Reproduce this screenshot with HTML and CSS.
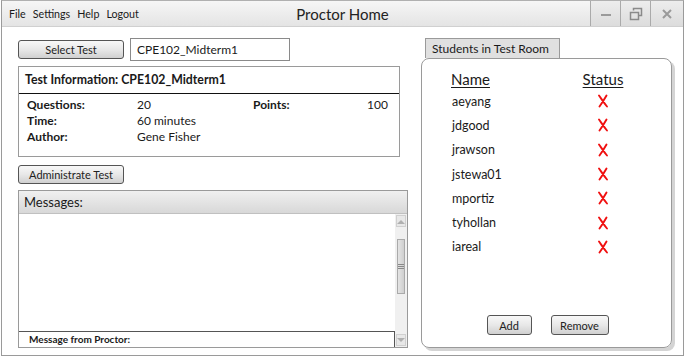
FILE: index.html
```html
<!DOCTYPE html>
<html lang="en">

<head>
    <meta charset="UTF-8">
    <title>Proctor Home</title>
    <link rel="stylesheet" href="styles.css">
</head>

<body>
    <div class="window">
        <div class="titlebar">
            <div class="menu">
                <span>File</span>
                <span>Settings</span>
                <span>Help</span>
                <span>Logout</span>
            </div>
            <div class="title">Proctor Home</div>
            <div class="controls">
                <div class="ctl">
                    <svg width="14" height="14" viewBox="0 0 14 14"><path d="M2 8h10" stroke="#9a9a9a" stroke-width="2" /></svg>
                </div>
                <div class="ctl">
                    <svg width="14" height="14" viewBox="0 0 14 14"><rect x="1.5" y="5.5" width="8" height="7" fill="none" stroke="#8a8a8a" stroke-width="1.5" /><path d="M4.5 3.5V1.5h8v7h-3" fill="none" stroke="#8a8a8a" stroke-width="1.5" /></svg>
                </div>
                <div class="ctl ctl-close">
                    <svg width="14" height="14" viewBox="0 0 14 14"><path d="M3 3l8 8M11 3l-8 8" stroke="#9a9a9a" stroke-width="2" /></svg>
                </div>
            </div>
        </div>

        <div class="content">
            <div class="left">
                <div class="select-row">
                    <button class="btn btn-wide">Select Test</button>
                    <div class="textbox">CPE102_Midterm1</div>
                </div>

                <div class="info">
                    <div class="info-head">Test Information: CPE102_Midterm1</div>
                    <div class="info-body">
                        <span class="lbl">Questions:</span>
                        <span>20</span>
                        <span class="lbl">Points:</span>
                        <span class="num">100</span>
                        <span class="lbl">Time:</span>
                        <span>60 minutes</span>
                        <span></span>
                        <span></span>
                        <span class="lbl">Author:</span>
                        <span>Gene Fisher</span>
                        <span></span>
                        <span></span>
                    </div>
                </div>

                <button class="btn btn-wide btn-admin">Administrate Test</button>

                <div class="messages">
                    <div class="msg-head">Messages:</div>
                    <div class="msg-main">
                        <div class="msg-col">
                            <div class="msg-log"></div>
                            <div class="msg-input">Message from Proctor:</div>
                        </div>
                        <div class="scrollbar">
                            <div class="arrow">
                                <svg width="8" height="5" viewBox="0 0 8 5"><path d="M0 5L4 1L8 5Z" fill="#b0b0b0" /></svg>
                            </div>
                            <div class="track">
                                <div class="thumb"><span></span><span></span><span></span></div>
                            </div>
                            <div class="arrow">
                                <svg width="8" height="5" viewBox="0 0 8 5"><path d="M0 0L4 4L8 0Z" fill="#b0b0b0" /></svg>
                            </div>
                        </div>
                    </div>
                </div>
            </div>

            <div class="right">
                <div class="tab">Students in Test Room</div>
                <div class="panel">
                    <div class="students">
                        <span class="col-head">Name</span>
                        <span class="col-head status">Status</span>
                    </div>
                    <div class="students rows" id="rows"></div>
                    <div class="panel-buttons">
                        <button class="btn btn-add">Add</button>
                        <button class="btn btn-remove">Remove</button>
                    </div>
                </div>
            </div>
        </div>
    </div>

    <script>
        const students = ['aeyang', 'jdgood', 'jrawson', 'jstewa01', 'mportiz', 'tyhollan', 'iareal'];
        const rows = document.querySelector('#rows');

        rows.innerHTML = students.map(name => `
            <span class="name">${name}</span>
            <span class="status">
                <svg width="12" height="14" viewBox="0 0 12 14"><path d="M2 1.5C4.5 5 7 9 10 12.5M9.5 1.5C7.5 5 5 9 2.5 12.5" fill="none" stroke="#f01010" stroke-width="1.9" stroke-linecap="round" /></svg>
            </span>
        `).join('');
    </script>
</body>

</html>
```

FILE: styles.css
```css
body {
    margin: 0;
    padding: 0;
    background-color: white;
    font-family: "Lato", "Open Sans", sans-serif;
    color: #1a1a1a;
}

.window {
    width: 683px;
    height: 356px;
    margin-left: 1px;
    border: 1px solid #9a9a9a;
    border-top: 1px solid #b0b0b0;
    box-sizing: border-box;
}

.titlebar {
    height: 26px;
    display: grid;
    grid-template-columns: 1fr auto 1fr;
    align-items: center;
    background: linear-gradient(#f6f6f6, #e4e4e4);
    border-bottom: 1px solid #d0d0d0;
    box-sizing: border-box;
}

.menu {
    display: flex;
    gap: 7px;
    padding-left: 7px;
    font-size: 10.7px;
}

.title {
    font-size: 15px;
    color: #222;
}

.controls {
    display: flex;
    justify-content: flex-end;
    height: 100%;
}

.ctl {
    width: 29px;
    height: 100%;
    border-left: 1px solid #aaa;
    display: flex;
    align-items: center;
    justify-content: center;
    background: linear-gradient(#ededed, #dcdcdc);
}

.ctl-close {
    width: 32px;
}

.content {
    display: flex;
    padding: 11px 0 0 16px;
}

.left {
    width: 390px;
}

.select-row {
    display: flex;
    align-items: center;
    gap: 6px;
}

.btn {
    font-family: inherit;
    font-size: 11px;
    color: #222;
    height: 19px;
    padding: 0;
    border: 1px solid #555;
    border-radius: 3px;
    background: linear-gradient(#f8f8f8 0%, #e8e8e8 50%, #d0d0d0 100%);
    cursor: pointer;
}

.btn-wide {
    width: 106px;
}

.textbox {
    width: 160px;
    height: 23px;
    border: 1px solid #8a8a8a;
    box-sizing: border-box;
    padding: 3px 0 0 6px;
    font-size: 12px;
}

.info {
    width: 382px;
    height: 91px;
    margin-top: 5px;
    border: 1px solid #9a9a9a;
    box-sizing: border-box;
}

.info-head {
    height: 27px;
    border-bottom: 1px solid #111;
    box-sizing: border-box;
    padding: 5px 0 0 6px;
    font-size: 12.3px;
    font-weight: bold;
}

.info-body {
    display: grid;
    grid-template-columns: 110px 116px 1fr 40px;
    padding: 3px 11px 0 8px;
    font-size: 12px;
    line-height: 16px;
}

.lbl {
    font-weight: bold;
}

.num {
    text-align: right;
}

.btn-admin {
    display: block;
    margin-top: 8px;
}

.messages {
    width: 390px;
    height: 158px;
    margin-top: 6px;
    border: 1px solid #9a9a9a;
    box-sizing: border-box;
    display: flex;
    flex-direction: column;
}

.msg-head {
    height: 23px;
    background: linear-gradient(#f0f0f0, #d8d8d8);
    border-bottom: 1px solid #c0c0c0;
    box-sizing: border-box;
    padding: 3px 0 0 5px;
    font-size: 13px;
}

.msg-main {
    flex: 1;
    display: flex;
}

.msg-col {
    flex: 1;
    display: flex;
    flex-direction: column;
}

.msg-log {
    flex: 1;
}

.msg-input {
    height: 16px;
    border: 1px solid #555;
    border-left: none;
    border-bottom: none;
    box-sizing: border-box;
    padding: 1px 0 0 10px;
    font-size: 10px;
    font-weight: bold;
}

.scrollbar {
    width: 12px;
    background-color: #f0f0f0;
    display: flex;
    flex-direction: column;
}

.arrow {
    height: 12px;
    margin: 1px;
    border: 1px solid #d0d0d0;
    background-color: #e8e8e8;
    box-sizing: border-box;
    display: flex;
    align-items: center;
    justify-content: center;
}

.track {
    flex: 1;
    padding-top: 11px;
}

.thumb {
    width: 8px;
    height: 55px;
    margin-left: 2px;
    border: 1px solid #aaa;
    background: linear-gradient(90deg, #e4e4e4, #cfcfcf);
    box-sizing: border-box;
    display: flex;
    flex-direction: column;
    justify-content: center;
    gap: 1px;
}

.thumb span {
    height: 1px;
    background-color: #888;
}

.right {
    margin-left: 13px;
}

.tab {
    width: 135px;
    height: 20px;
    margin-left: 4px;
    background-color: #e0e0e0;
    border: 1px solid #9a9a9a;
    border-bottom: none;
    box-sizing: border-box;
    padding: 2px 0 0 6px;
    font-size: 12px;
}

.panel {
    width: 251px;
    height: 290px;
    border: 1px solid #9a9a9a;
    border-radius: 8px;
    box-shadow: 3px 3px 0 #d4d4d4;
    box-sizing: border-box;
    padding: 11px 0 0 29px;
    display: flex;
    flex-direction: column;
}

.students {
    display: grid;
    grid-template-columns: 131px 42px;
    align-items: center;
}

.col-head {
    font-size: 15px;
    text-decoration: underline;
    text-underline-offset: 2px;
}

.rows {
    grid-auto-rows: 24.3px;
    margin-top: 1px;
    font-size: 12.5px;
}

.name {
    padding-left: 1px;
}

.status {
    text-align: center;
}

.status svg {
    display: block;
    margin: 0 auto;
}

.panel-buttons {
    margin-top: auto;
    margin-bottom: 12px;
    margin-left: -27px;
    display: flex;
    justify-content: center;
    gap: 19px;
}

.btn-add {
    width: 45px;
    height: 20px;
    font-size: 11px;
}

.btn-remove {
    width: 58px;
    height: 20px;
    font-size: 11px;
}
```
